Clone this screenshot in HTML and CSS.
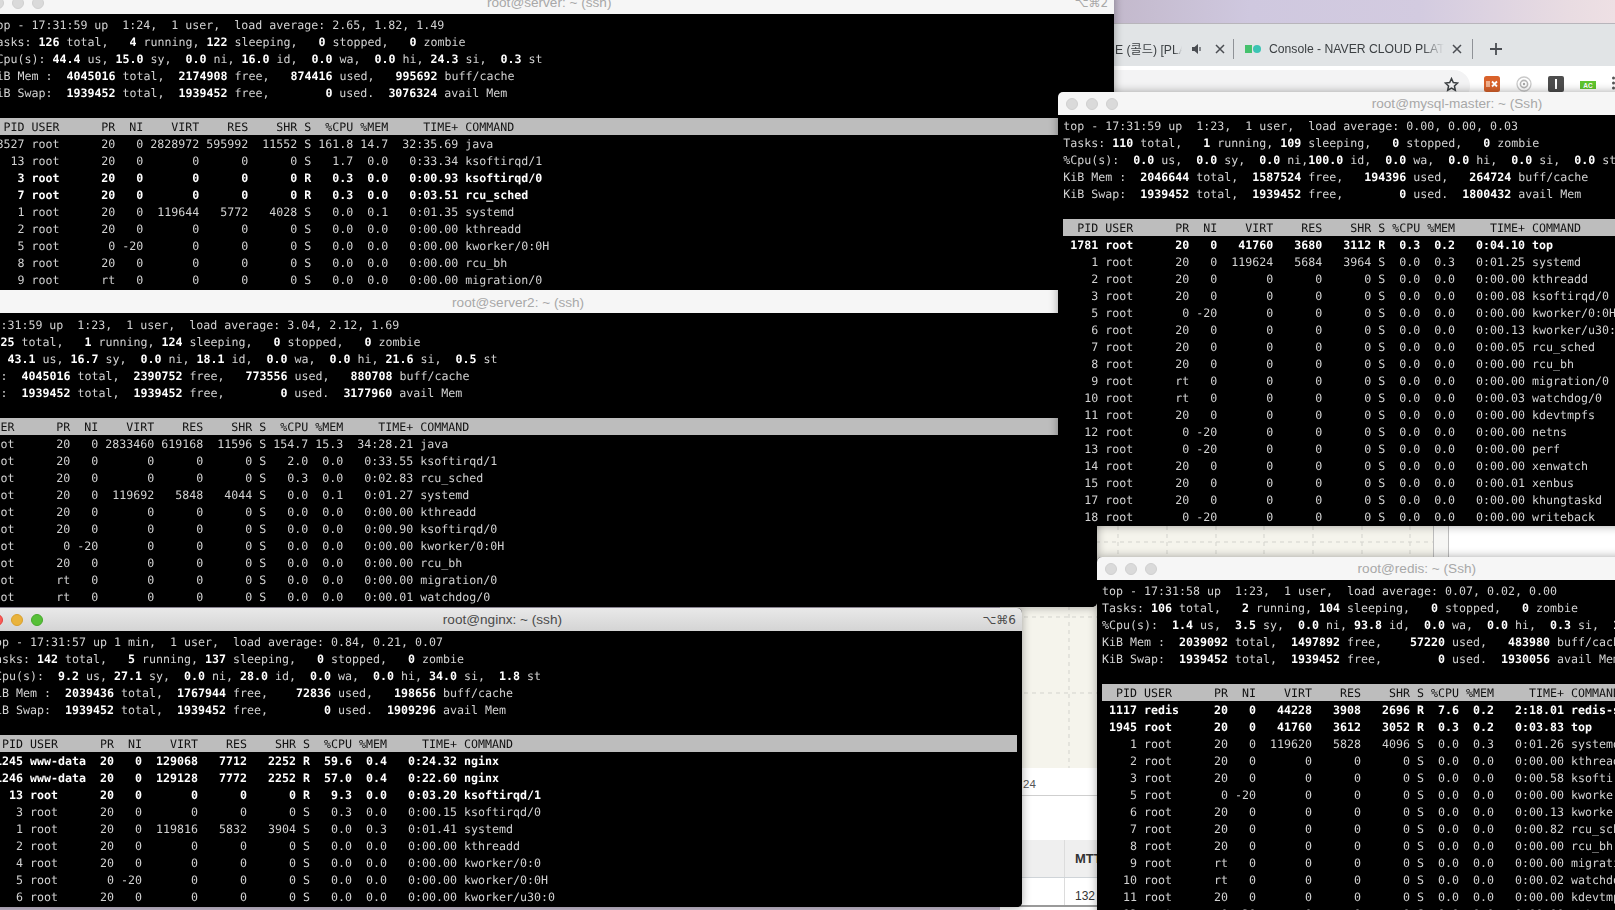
FILE: index.html
```html
<!DOCTYPE html>
<html lang="en">
<head>
<meta charset="utf-8">
<title>top on five servers</title>
<link rel="stylesheet" href="styles.css">
</head>
<body>
<div class="desktop">

<section class="browser">
  <div class="tabstrip">
    <div class="tab tab-first">
      <span class="tab-label">E (콜드) [PLAYLIST]</span>
      <svg class="tab-audio" width="10" height="12" viewBox="0 0 10 12"><path d="M0 4h2.5L6 1v10L2.500 8H0z" fill="#4a4d52"/><path d="M8 4v4" stroke="#4a4d52" stroke-width="1.200"/></svg>
      <svg class="tab-close" width="10" height="10" viewBox="0 0 10 10"><path d="M1 1l8 8M9 1l-8 8" stroke="#4a4d52" stroke-width="1.500"/></svg>
    </div>
    <span class="tab-sep"></span>
    <div class="tab tab-second">
      <svg class="tab-favicon" width="16" height="8" viewBox="0 0 16 8"><rect width="7" height="8" fill="#45c16d"/><circle cx="12" cy="4" r="4" fill="#3cc4b4"/></svg>
      <span class="tab-label">Console - NAVER CLOUD PLATFORM</span>
      <svg class="tab-close" width="10" height="10" viewBox="0 0 10 10"><path d="M1 1l8 8M9 1l-8 8" stroke="#4a4d52" stroke-width="1.500"/></svg>
    </div>
    <span class="tab-sep"></span>
    <svg class="tab-new" width="12" height="12" viewBox="0 0 12 12"><path d="M6 0v12M0 6h12" stroke="#4a4d52" stroke-width="1.800"/></svg>
  </div>
  <div class="toolbar">
    <div class="omnibox">
      <svg width="15" height="15" viewBox="0 0 24 24"><path d="M12 2.500l2.900 6.300 6.900.8-5.100 4.700 1.400 6.800-6.100-3.400-6.100 3.400 1.400-6.800L2.200 9.600l6.900-.8z" fill="none" stroke="#3c4043" stroke-width="2.400"/></svg>
    </div>
    <div class="extensions">
      <svg width="16" height="16" viewBox="0 0 16 16"><rect width="16" height="16" rx="2.500" fill="#d9622b"/><rect x="2" y="5" width="4" height="6" fill="#f0b08e"/><path d="M8 5.500l5 5M13 5.500l-5 5" stroke="#fff" stroke-width="1.800"/></svg>
      <svg width="16" height="16" viewBox="0 0 16 16"><circle cx="8" cy="8" r="7" fill="none" stroke="#c9c9c9" stroke-width="1.300"/><circle cx="8" cy="8" r="3.600" fill="none" stroke="#b5b5b5" stroke-width="1.600"/><circle cx="8" cy="8" r="1.200" fill="#a5a5a5"/></svg>
      <svg width="16" height="16" viewBox="0 0 16 16"><rect width="16" height="16" rx="2" fill="#4d4d4d"/><rect x="7" y="3" width="2" height="10" fill="#fff"/></svg>
      <svg class="ext-ac" width="16" height="8" viewBox="0 0 16 8"><rect width="16" height="8" fill="#5ec42f"/><text x="8" y="6.500" text-anchor="middle" class="ext-ac-text">AC</text></svg>
      <svg width="3" height="14" viewBox="0 0 3 14"><circle cx="1.500" cy="2" r="1.500" fill="#555"/><circle cx="1.500" cy="7" r="1.500" fill="#555"/><circle cx="1.500" cy="12" r="1.500" fill="#555"/></svg>
    </div>
  </div>
  <div class="page">
    <div class="chart-row">
      <svg class="chart" width="433" height="666" viewBox="0 0 433 666">
        <path class="grid" d="M0 440H433M0 515H433M0 591H433M69 0V666M118 0V666M167 0V666M216 0V666M264 0V666M313 0V666M362 0V666M410 0V666"/>
      </svg>
      <div class="chart-gutter"></div>
      <div class="chart-rest"></div>
    </div>
    <div class="axis-row">24</div>
    <div class="page-gap"></div>
    <div class="table-row table-head"><span class="cell-first"></span><span class="cell">MTTR</span></div>
    <div class="table-row"><span class="cell-first"></span><span class="cell">132</span></div>
  </div>
</section>

<section class="win win-server">
  <header class="title"><span class="lights"><i></i><i></i><i></i></span><span class="title-text">root@server: ~ (ssh)</span><span class="keys">⌥⌘2</span></header>
<pre class="term">top - 17:31:59 up  1:24,  1 user,  load average: 2.65, 1.82, 1.49
Tasks: <b>126</b> total,   <b>4</b> running, <b>122</b> sleeping,   <b>0</b> stopped,   <b>0</b> zombie
%Cpu(s): <b>44.4</b> us, <b>15.0</b> sy,  <b>0.0</b> ni, <b>16.0</b> id,  <b>0.0</b> wa,  <b>0.0</b> hi, <b>24.3</b> si,  <b>0.3</b> st
KiB Mem :  <b>4045016</b> total,  <b>2174908</b> free,   <b>874416</b> used,   <b>995692</b> buff/cache
KiB Swap:  <b>1939452</b> total,  <b>1939452</b> free,        <b>0</b> used.  <b>3076324</b> avail Mem

<span class="band">  PID USER      PR  NI    VIRT    RES    SHR S  %CPU %MEM     TIME+ COMMAND</span> 8527 root      20   0 2828972 595992  11552 S 161.8 14.7  32:35.69 java
   13 root      20   0       0      0      0 S   1.7  0.0   0:33.34 ksoftirqd/1
<b>    3 root      20   0       0      0      0 R   0.3  0.0   0:00.93 ksoftirqd/0</b>
<b>    7 root      20   0       0      0      0 R   0.3  0.0   0:03.51 rcu_sched</b>
    1 root      20   0  119644   5772   4028 S   0.0  0.1   0:01.35 systemd
    2 root      20   0       0      0      0 S   0.0  0.0   0:00.00 kthreadd
    5 root       0 -20       0      0      0 S   0.0  0.0   0:00.00 kworker/0:0H
    8 root      20   0       0      0      0 S   0.0  0.0   0:00.00 rcu_bh
    9 root      rt   0       0      0      0 S   0.0  0.0   0:00.00 migration/0</pre>
</section>

<section class="win win-server2">
  <header class="title"><span class="lights"><i></i><i></i><i></i></span><span class="title-text">root@server2: ~ (ssh)</span><span class="keys"></span></header>
<pre class="term">top - 17:31:59 up  1:23,  1 user,  load average: 3.04, 2.12, 1.69
Tasks: <b>125</b> total,   <b>1</b> running, <b>124</b> sleeping,   <b>0</b> stopped,   <b>0</b> zombie
%Cpu(s): <b>43.1</b> us, <b>16.7</b> sy,  <b>0.0</b> ni, <b>18.1</b> id,  <b>0.0</b> wa,  <b>0.0</b> hi, <b>21.6</b> si,  <b>0.5</b> st
KiB Mem :  <b>4045016</b> total,  <b>2390752</b> free,   <b>773556</b> used,   <b>880708</b> buff/cache
KiB Swap:  <b>1939452</b> total,  <b>1939452</b> free,        <b>0</b> used.  <b>3177960</b> avail Mem

<span class="band">  PID USER      PR  NI    VIRT    RES    SHR S  %CPU %MEM     TIME+ COMMAND</span> 8412 root      20   0 2833460 619168  11596 S 154.7 15.3  34:28.21 java
   13 root      20   0       0      0      0 S   2.0  0.0   0:33.55 ksoftirqd/1
    7 root      20   0       0      0      0 S   0.3  0.0   0:02.83 rcu_sched
    1 root      20   0  119692   5848   4044 S   0.0  0.1   0:01.27 systemd
    2 root      20   0       0      0      0 S   0.0  0.0   0:00.00 kthreadd
    3 root      20   0       0      0      0 S   0.0  0.0   0:00.90 ksoftirqd/0
    5 root       0 -20       0      0      0 S   0.0  0.0   0:00.00 kworker/0:0H
    8 root      20   0       0      0      0 S   0.0  0.0   0:00.00 rcu_bh
    9 root      rt   0       0      0      0 S   0.0  0.0   0:00.00 migration/0
   10 root      rt   0       0      0      0 S   0.0  0.0   0:00.01 watchdog/0</pre>
</section>

<section class="win win-nginx">
  <header class="title"><span class="lights"><i class="red"></i><i class="yellow"></i><i class="green"></i></span><span class="title-text">root@nginx: ~ (ssh)</span><span class="keys">⌥⌘6</span></header>
<pre class="term">top - 17:31:57 up 1 min,  1 user,  load average: 0.84, 0.21, 0.07
Tasks: <b>142</b> total,   <b>5</b> running, <b>137</b> sleeping,   <b>0</b> stopped,   <b>0</b> zombie
%Cpu(s):  <b>9.2</b> us, <b>27.1</b> sy,  <b>0.0</b> ni, <b>28.0</b> id,  <b>0.0</b> wa,  <b>0.0</b> hi, <b>34.0</b> si,  <b>1.8</b> st
KiB Mem :  <b>2039436</b> total,  <b>1767944</b> free,    <b>72836</b> used,   <b>198656</b> buff/cache
KiB Swap:  <b>1939452</b> total,  <b>1939452</b> free,        <b>0</b> used.  <b>1909296</b> avail Mem

<span class="band">  PID USER      PR  NI    VIRT    RES    SHR S  %CPU %MEM     TIME+ COMMAND</span><b> 1245 www-data  20   0  129068   7712   2252 R  59.6  0.4   0:24.32 nginx</b>
<b> 1246 www-data  20   0  129128   7772   2252 R  57.0  0.4   0:22.60 nginx</b>
<b>   13 root      20   0       0      0      0 R   9.3  0.0   0:03.20 ksoftirqd/1</b>
    3 root      20   0       0      0      0 S   0.3  0.0   0:00.15 ksoftirqd/0
    1 root      20   0  119816   5832   3904 S   0.0  0.3   0:01.41 systemd
    2 root      20   0       0      0      0 S   0.0  0.0   0:00.00 kthreadd
    4 root      20   0       0      0      0 S   0.0  0.0   0:00.00 kworker/0:0
    5 root       0 -20       0      0      0 S   0.0  0.0   0:00.00 kworker/0:0H
    6 root      20   0       0      0      0 S   0.0  0.0   0:00.00 kworker/u30:0</pre>
</section>

<section class="win win-redis">
  <header class="title"><span class="lights"><i></i><i></i><i></i></span><span class="title-text">root@redis: ~ (Ssh)</span><span class="keys"></span></header>
<pre class="term">top - 17:31:58 up  1:23,  1 user,  load average: 0.07, 0.02, 0.00
Tasks: <b>106</b> total,   <b>2</b> running, <b>104</b> sleeping,   <b>0</b> stopped,   <b>0</b> zombie
%Cpu(s):  <b>1.4</b> us,  <b>3.5</b> sy,  <b>0.0</b> ni, <b>93.8</b> id,  <b>0.0</b> wa,  <b>0.0</b> hi,  <b>0.3</b> si,  <b>1.0</b> st
KiB Mem :  <b>2039092</b> total,  <b>1497892</b> free,    <b>57220</b> used,   <b>483980</b> buff/cache
KiB Swap:  <b>1939452</b> total,  <b>1939452</b> free,        <b>0</b> used.  <b>1930056</b> avail Mem

<span class="band">  PID USER      PR  NI    VIRT    RES    SHR S %CPU %MEM     TIME+ COMMAND</span><b> 1117 redis     20   0   44228   3908   2696 R  7.6  0.2   2:18.01 redis-server</b>
<b> 1945 root      20   0   41760   3612   3052 R  0.3  0.2   0:03.83 top</b>
    1 root      20   0  119620   5828   4096 S  0.0  0.3   0:01.26 systemd
    2 root      20   0       0      0      0 S  0.0  0.0   0:00.00 kthreadd
    3 root      20   0       0      0      0 S  0.0  0.0   0:00.58 ksoftirqd/0
    5 root       0 -20       0      0      0 S  0.0  0.0   0:00.00 kworker/0:0H
    6 root      20   0       0      0      0 S  0.0  0.0   0:00.13 kworker/u30:0
    7 root      20   0       0      0      0 S  0.0  0.0   0:00.82 rcu_sched
    8 root      20   0       0      0      0 S  0.0  0.0   0:00.00 rcu_bh
    9 root      rt   0       0      0      0 S  0.0  0.0   0:00.00 migration/0
   10 root      rt   0       0      0      0 S  0.0  0.0   0:00.02 watchdog/0
   11 root      20   0       0      0      0 S  0.0  0.0   0:00.00 kdevtmpfs
   12 root       0 -20       0      0      0 S  0.0  0.0   0:00.00 netns</pre>
</section>

<section class="win win-mysql">
  <header class="title"><span class="lights"><i></i><i></i><i></i></span><span class="title-text">root@mysql-master: ~ (Ssh)</span><span class="keys"></span></header>
<pre class="term">top - 17:31:59 up  1:23,  1 user,  load average: 0.00, 0.00, 0.03
Tasks: <b>110</b> total,   <b>1</b> running, <b>109</b> sleeping,   <b>0</b> stopped,   <b>0</b> zombie
%Cpu(s):  <b>0.0</b> us,  <b>0.0</b> sy,  <b>0.0</b> ni,<b>100.0</b> id,  <b>0.0</b> wa,  <b>0.0</b> hi,  <b>0.0</b> si,  <b>0.0</b> st
KiB Mem :  <b>2046644</b> total,  <b>1587524</b> free,   <b>194396</b> used,   <b>264724</b> buff/cache
KiB Swap:  <b>1939452</b> total,  <b>1939452</b> free,        <b>0</b> used.  <b>1800432</b> avail Mem

<span class="band">  PID USER      PR  NI    VIRT    RES    SHR S %CPU %MEM     TIME+ COMMAND</span><b> 1781 root      20   0   41760   3680   3112 R  0.3  0.2   0:04.10 top</b>
    1 root      20   0  119624   5684   3964 S  0.0  0.3   0:01.25 systemd
    2 root      20   0       0      0      0 S  0.0  0.0   0:00.00 kthreadd
    3 root      20   0       0      0      0 S  0.0  0.0   0:00.08 ksoftirqd/0
    5 root       0 -20       0      0      0 S  0.0  0.0   0:00.00 kworker/0:0H
    6 root      20   0       0      0      0 S  0.0  0.0   0:00.13 kworker/u30:0
    7 root      20   0       0      0      0 S  0.0  0.0   0:00.05 rcu_sched
    8 root      20   0       0      0      0 S  0.0  0.0   0:00.00 rcu_bh
    9 root      rt   0       0      0      0 S  0.0  0.0   0:00.00 migration/0
   10 root      rt   0       0      0      0 S  0.0  0.0   0:00.03 watchdog/0
   11 root      20   0       0      0      0 S  0.0  0.0   0:00.00 kdevtmpfs
   12 root       0 -20       0      0      0 S  0.0  0.0   0:00.00 netns
   13 root       0 -20       0      0      0 S  0.0  0.0   0:00.00 perf
   14 root      20   0       0      0      0 S  0.0  0.0   0:00.00 xenwatch
   15 root      20   0       0      0      0 S  0.0  0.0   0:00.01 xenbus
   17 root      20   0       0      0      0 S  0.0  0.0   0:00.00 khungtaskd
   18 root       0 -20       0      0      0 S  0.0  0.0   0:00.00 writeback</pre>
</section>

</div>
</body>
</html>
```

FILE: styles.css
```css
* { box-sizing: border-box; }
html, body { margin: 0; padding: 0; height: 910px; overflow: hidden; }

.desktop {
  position: relative;
  width: 1615px;
  height: 910px;
  overflow: hidden;
  background: linear-gradient(90deg, #c3b9cc 1114px, #cfc8df 1250px, #d3cbe0 1420px, #e9dce2 1570px, #eee0e4 1615px);
}

/* ---------- browser behind the terminals ---------- */
.browser {
  position: absolute;
  left: 1000px;
  top: 23px;
  width: 615px;
  height: 887px;
  display: flex;
  flex-direction: column;
  font-family: "Liberation Sans", "Noto Sans CJK KR", sans-serif;
}
.tabstrip {
  height: 43px;
  flex: none;
  display: flex;
  align-items: center;
  padding-top: 8px;
  background: #e1e4e6;
  border-top: 1px solid #b8b5bb;
  color: #3c4043;
  font-size: 12.200px;
}
.tab { display: flex; align-items: center; height: 100%; }
.tab-first { width: 233px; padding-left: 115px; }
.tab-second { width: 238px; padding-left: 11px; }
.tab-label {
  flex: none;
  overflow: hidden;
  white-space: nowrap;
  -webkit-mask-image: linear-gradient(90deg, #000 88%, transparent);
  mask-image: linear-gradient(90deg, #000 88%, transparent);
}
.tab-first .tab-label { width: 67px; }
.tab-second .tab-label { width: 175px; margin-left: 8px; }
.tab-audio { flex: none; margin-left: 10px; }
.tab-first .tab-close { margin-left: 13px; }
.tab-second .tab-close { margin-left: 8px; }
.tab-sep { flex: none; width: 1px; height: 20px; background: #8f9297; }
.tab-new { flex: none; margin-left: 17px; }

.toolbar {
  height: 36px;
  flex: none;
  display: flex;
  background: #fff;
}
.omnibox {
  flex: none;
  width: 470px;
  height: 32px;
  margin-top: 4px;
  padding: 7px 11px 0 0;
  display: flex;
  justify-content: flex-end;
  background: #f3f3f4;
  border-radius: 0 16px 16px 0;
}
.extensions {
  flex: none;
  display: flex;
  align-items: flex-start;
  gap: 16px;
  padding: 10px 0 0 14px;
}
.ext-ac { margin-top: 5px; }
.ext-ac-text { font-size: 6.500px; font-weight: 700; fill: #fff; font-family: "Liberation Sans", sans-serif; }

.page { flex: 1; display: flex; flex-direction: column; background: #fff; }
.chart-row { height: 666px; flex: none; display: flex; border-bottom: 1px solid #c8c8c8; }
.chart { flex: none; background: #f5f4ec; display: block; }
.grid { fill: none; stroke: #d3d3cd; stroke-width: 1; stroke-dasharray: 4 4; }
.chart-gutter { flex: none; width: 16px; border-left: 1px solid #bdbdbd; border-right: 1px solid #bdbdbd; background: #f6f6f4; }
.chart-rest { flex: 1; background: #fff; }
.axis-row {
  height: 28px;
  flex: none;
  padding-left: 23px;
  line-height: 32px;
  font-size: 11.500px;
  color: #555;
  border-bottom: 1px solid #cfcfcf;
}
.page-gap { height: 44px; flex: none; }
.table-row {
  height: 29px;
  flex: none;
  display: flex;
  font-size: 12px;
  color: #333;
  border-bottom: 2px solid #9a9a9a;
}
.table-row .cell { padding-top: 9px; }
.table-head {
  height: 38px;
  background: #efefef;
  font-size: 13px;
  font-weight: 700;
  border-bottom: 1px solid #cfd4d8;
}
.table-head .cell { padding-top: 0; }
.cell-first { width: 65px; flex: none; border-right: 1px solid #dcdcdc; }
.cell { padding-left: 10px; display: flex; align-items: center; }

/* ---------- terminal windows ---------- */
.win {
  position: absolute;
  display: flex;
  flex-direction: column;
  overflow: hidden;
  background: #000;
  border-radius: 5px;
  box-shadow: 0 0 10px rgba(0, 0, 0, .35);
}
.win-server  { left: -15.800px; top: -9px;  width: 1130px;   height: 299px; }
.win-server2 { left: -60.800px; top: 290px; width: 1157.800px; height: 317px; }
.win-nginx   { left: -17.200px; top: 608px; width: 1039.200px; height: 299px; }
.win-redis   { left: 1096.800px; top: 557px; width: 640px;   height: 400px; }
.win-mysql   { left: 1058px;    top: 92px;  width: 798px;    height: 434px; }

.title {
  height: 23px;
  flex: none;
  display: grid;
  grid-template-columns: 1fr auto 1fr;
  align-items: center;
  background: #f6f6f6;
  color: #a8a8a8;
  font-family: "Liberation Sans", sans-serif;
  font-size: 13.600px;
}
.win-nginx .title { background: linear-gradient(#e9e9e9, #d4d4d4); color: #4a4a4a; }
.win-server2 .title-text { padding-top: 1px; }
.lights { display: flex; gap: 8px; padding-left: 8px; }
.lights i { width: 12px; height: 12px; border-radius: 50%; background: #dadada; border: 1px solid #d0d0d0; }
.lights .red { background: #fc5b57; border-color: #e0443e; }
.lights .yellow { background: #e9b33c; border-color: #d9a02c; }
.lights .green { background: #57c038; border-color: #47a82c; }
.keys { justify-self: end; padding-right: 6px; font-family: "DejaVu Sans", sans-serif; font-size: 12px; }

.term {
  flex: 1;
  margin: 0;
  padding: 3px 5.200px 0;
  background: #000;
  color: #d2d2d2;
  font-family: "DejaVu Sans Mono", monospace;
  font-size: 11.630px;
  line-height: 17px;
  white-space: pre;
  overflow: hidden;
  text-rendering: geometricPrecision;
  filter: blur(.3px);
}
.win-server2 .term { padding-top: 4px; }
.term b { color: #fff; font-weight: 700; }
.band {
  display: block;
  margin-top: -1px;
  padding-top: 1px;
  background: linear-gradient(#bdbdbd 17px, transparent 17px);
  color: #111;
}
```
